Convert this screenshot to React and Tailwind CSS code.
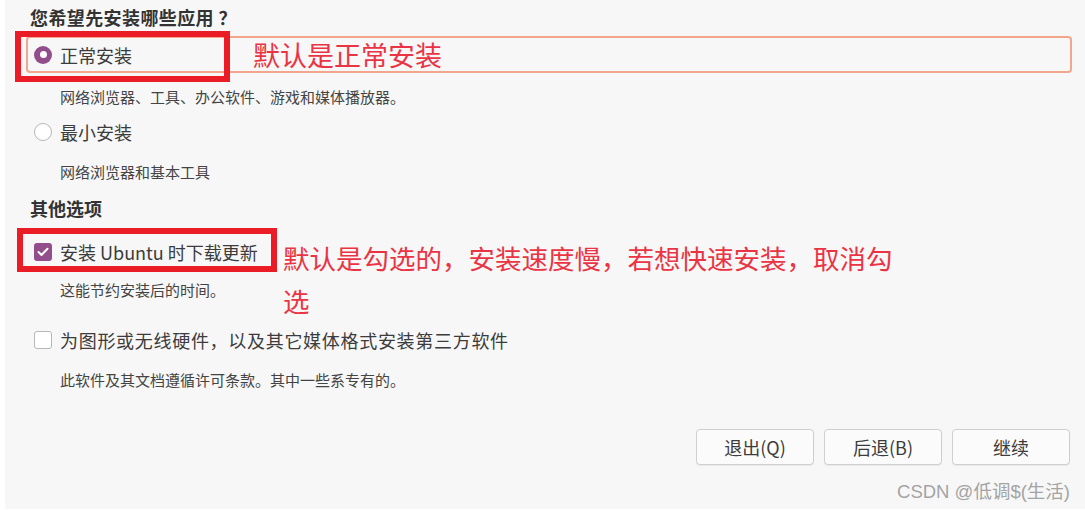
export default function App() {
  const Radio = ({ checked }) =>
    checked ? (
      <span className="flex h-[18px] w-[18px] shrink-0 items-center justify-center rounded-full bg-[#924d8b]">
        <span className="h-[7px] w-[7px] rounded-full bg-white" />
      </span>
    ) : (
      <span className="h-[18px] w-[18px] shrink-0 rounded-full border border-[#b6b6b6] bg-white" />
    );

  const Check = ({ checked }) =>
    checked ? (
      <span className="flex h-[18px] w-[18px] shrink-0 items-center justify-center rounded-[3px] bg-[#924d8b]">
        <svg width="12" height="10" viewBox="0 0 12 10">
          <polyline points="1.5,5 4.5,8 10.5,1.8" fill="none" stroke="white" strokeWidth="2" strokeLinecap="round" strokeLinejoin="round" />
        </svg>
      </span>
    ) : (
      <span className="h-[18px] w-[18px] shrink-0 rounded-[3px] border border-[#b6b6b6] bg-white" />
    );

  const Btn = ({ children }) => (
    <button className="h-[36px] w-[118px] rounded-[4px] border border-[#cfcfcf] bg-[#fbfbfb] text-[18px] text-[#3c3c3c] shadow-[0_1px_1px_rgba(0,0,0,0.06)]">
      {children}
    </button>
  );

  return (
    <div className="h-[511px] w-[1085px] bg-white pb-[2px] pl-[5px] font-['Noto_Sans_CJK_SC',sans-serif]">
      <div className="relative flex h-full flex-col bg-[#f7f7f7] text-[#3c3c3c]">
        <h2 className="ml-[25px] mt-[5px] h-[24px] text-[18px] font-bold leading-[24px] tracking-[0.4px] text-[#333]">
          您希望先安装哪些应用 ？
        </h2>

        <div className="relative ml-[21px] mt-[7px] flex h-[37px] w-[1046px] items-center gap-[8px] rounded-[4px] border-2 border-[#f3a68b] pl-[6px]">
          <Radio checked />
          <span className="text-[18px] leading-[24px]">正常安装</span>
          <span className="absolute left-[225px] top-[2px] text-[27px] leading-[30px] text-[#ea3444]">
            默认是正常安装
          </span>
        </div>

        <p className="ml-[55px] mt-[14px] h-[20px] text-[15px] leading-[20px] text-[#444]">
          网络浏览器、工具、办公软件、游戏和媒体播放器。
        </p>

        <div className="ml-[29px] mt-[13px] flex h-[24px] items-center gap-[8px]">
          <Radio />
          <span className="text-[18px] leading-[24px]">最小安装</span>
        </div>

        <p className="ml-[55px] mt-[18px] h-[20px] text-[15px] leading-[20px] text-[#444]">
          网络浏览器和基本工具
        </p>

        <h2 className="ml-[25px] mt-[14px] h-[24px] text-[18px] font-bold leading-[24px] text-[#333]">
          其他选项
        </h2>

        <div className="ml-[29px] mt-[20px] flex h-[24px] items-center gap-[8px]">
          <Check checked />
          <span className="text-[18px] leading-[24px]">安装 Ubuntu 时下载更新</span>
        </div>

        <p className="ml-[55px] mt-[16px] h-[20px] text-[15px] leading-[20px] text-[#444]">
          这能节约安装后的时间。
        </p>

        <div className="ml-[29px] mt-[28px] flex h-[24px] items-center gap-[8px]">
          <Check />
          <span className="text-[18px] leading-[24px] tracking-[0.7px]">为图形或无线硬件，以及其它媒体格式安装第三方软件</span>
        </div>

        <p className="ml-[55px] mt-[18px] h-[20px] text-[15px] leading-[20px] text-[#444]">
          此软件及其文档遵循许可条款。其中一些系专有的。
        </p>

        <div className="mr-[15px] mt-[39px] flex justify-end gap-[10px]">
          <Btn>退出(Q)</Btn>
          <Btn>后退(B)</Btn>
          <Btn>继续</Btn>
        </div>

        <p className="mr-[15px] mt-[17px] h-[20px] text-right font-['Liberation_Sans','Noto_Sans_CJK_SC',sans-serif] text-[18.5px] leading-[20px] text-[#a4a4a4]">
          CSDN @低调$(生活)
        </p>

        {/* red annotation boxes */}
        <div className="absolute left-[10px] top-[31px] h-[51px] w-[215px] border-[6px] border-[#ea1c26]" />
        <div className="absolute left-[12px] top-[228px] h-[44px] w-[260px] border-[6px] border-[#ea1c26]" />
        <p className="absolute left-[278px] top-[236px] w-[630px] text-[26.5px] leading-[43px] text-[#ea3444]">
          默认是勾选的，安装速度慢，若想快速安装，取消勾选
        </p>
      </div>
    </div>
  );
}
